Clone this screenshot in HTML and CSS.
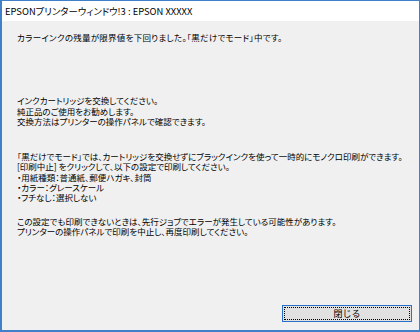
FILE: index.html
```html
<!DOCTYPE html>
<html lang="ja">
<head>
<meta charset="utf-8">
<link rel="stylesheet" href="styles.css">
</head>
<body>
<div class="window">
  <div class="titlebar">EPSONプリンターウィンドウ!3 : EPSON XXXXX</div>
  <div class="content">
    <p class="msg msg-status">カラーインクの残量が限界値を下回りました。「黒だけでモード」中です。</p>
    <p class="msg msg-advice">インクカートリッジを交換してください。<br>純正品のご使用をお勧めします。<br>交換方法はプリンターの操作パネルで確認できます。</p>
    <p class="msg msg-mode">「黒だけでモード」では、カートリッジを交換せずにブラックインクを使って一時的にモノクロ印刷ができます。<br>[印刷中止] をクリックして、以下の設定で印刷してください。<br>・用紙種類：普通紙、郵便ハガキ、封筒<br>・カラー：グレースケール<br>・フチなし：選択しない</p>
    <p class="msg msg-error">この設定でも印刷できないときは、先行ジョブでエラーが発生している可能性があります。<br>プリンターの操作パネルで印刷を中止し、再度印刷してください。</p>
    <div class="footer">
      <button class="btn" type="button"><span class="btn-focus">閉じる</span></button>
    </div>
  </div>
</div>
</body>
</html>
```
FILE: styles.css
```css
html, body {
  margin: 0;
  padding: 0;
  background: #ffffff;
}
body {
  font-family: "Noto Sans CJK JP", "Noto Sans", sans-serif;
  color: #000;
  font-feature-settings: "palt";
}
.window {
  width: 420px;
  height: 332px;
  box-sizing: border-box;
  border: 1px solid #3f80c8;
  border-left-width: 2px;
  border-bottom-width: 2px;
  display: flex;
  flex-direction: column;
}
.titlebar {
  height: 20px;
  flex: none;
  background: #ffffff;
  font-size: 9.4px;
  line-height: 20px;
  padding-left: 3px;
}
.content {
  flex: 1;
  background: #f0f0f0;
  padding: 11px 0 0 15px;
  display: flex;
  flex-direction: column;
}
.msg {
  margin: 0;
  font-size: 8.5px;
  line-height: 10.3px;
  white-space: nowrap;
}
.msg-status {
  letter-spacing: 0.25px;
}
.msg-advice {
  margin-top: 53px;
}
.msg-mode {
  margin-top: 25px;
}
.msg-error {
  margin-top: 13.5px;
}
.footer {
  margin-top: auto;
  display: flex;
  justify-content: flex-end;
  padding: 0 7px 8px 0;
}
.btn {
  width: 130px;
  height: 17px;
  padding: 1px;
  margin: 0;
  border: 1px solid #2a6fc9;
  background: #e1e1e1;
  font-family: inherit;
  font-size: 9px;
  color: #000;
  display: flex;
}
.btn-focus {
  flex: 1;
  border: 1px dotted #000;
  display: flex;
  align-items: center;
  justify-content: center;
  line-height: 1;
}
```
